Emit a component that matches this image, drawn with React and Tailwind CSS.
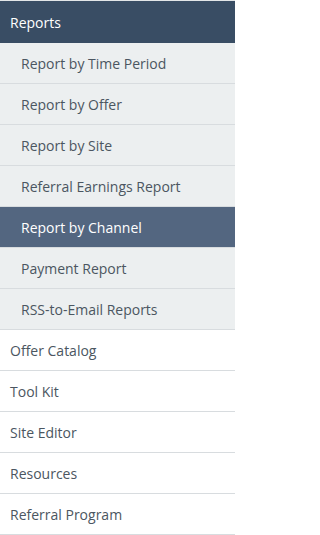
import React from "react";

const reportLinks = [
    "Report by Time Period",
    "Report by Offer",
    "Report by Site",
    "Referral Earnings Report",
    "Report by Channel",
    "Payment Report",
    "RSS-to-Email Reports",
];

const mainLinks = ["Offer Catalog", "Tool Kit", "Site Editor", "Resources", "Referral Program"];

const App = () => {
    const active = "Report by Channel";

    return (
        <nav
            className="w-[235px] min-h-[535px] bg-white border-t border-[#e3e6e8] text-[14px] text-[#4b5661]"
            style={{ fontFamily: '"Open Sans", sans-serif' }}
        >
            {/* Section header */}
            <div className="h-[42px] flex items-center px-[10px] bg-[#394d64] text-white">
                Reports
            </div>

            {/* Sub links */}
            <ul>
                {reportLinks.map((label) => (
                    <li
                        key={label}
                        className={
                            label === active
                                ? "h-[41px] flex items-center pl-[21px] bg-[#536680] text-white border-b border-[#d8dcdf]"
                                : "h-[41px] flex items-center pl-[21px] bg-[#eceff0] border-b border-[#d8dcdf]"
                        }
                    >
                        {label}
                    </li>
                ))}
            </ul>

            {/* Top level links */}
            <ul>
                {mainLinks.map((label) => (
                    <li
                        key={label}
                        className="h-[41px] flex items-center pl-[10px] bg-white border-b border-[#d8dcdf]"
                    >
                        {label}
                    </li>
                ))}
            </ul>
        </nav>
    );
};

export default App;
